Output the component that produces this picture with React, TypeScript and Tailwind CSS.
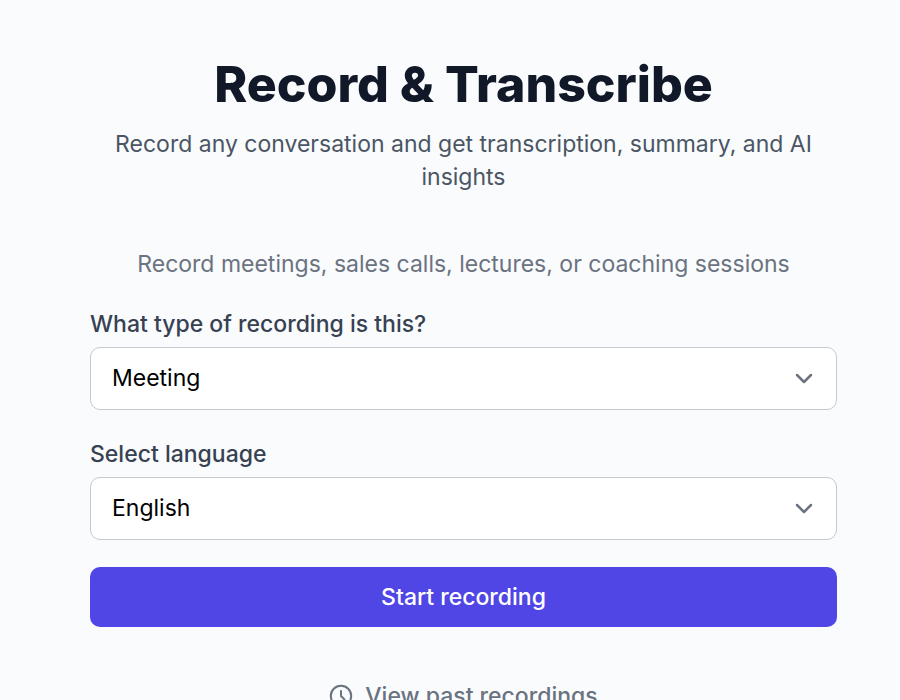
import React, { useState } from 'react';

interface SelectFieldProps {
  id: string;
  label: string;
  value: string;
  options: string[];
  onChange: (value: string) => void;
}

const ChevronIcon = () => (
  <svg viewBox="0 0 24 24" fill="none" stroke="currentColor" strokeWidth="2.5" strokeLinecap="round" strokeLinejoin="round" className="pointer-events-none absolute inset-y-0 right-[21px] my-auto h-6 w-6 text-[#6b7280]">
    <path d="M5 8l7 7 7-7" />
  </svg>
);

const ClockIcon = () => (
  <svg viewBox="0 0 24 24" fill="none" stroke="currentColor" strokeWidth="2" strokeLinecap="round" strokeLinejoin="round" className="h-6 w-6">
    <circle cx="12" cy="12" r="10.2" />
    <path d="M12 7v5l3.5 3.5" />
  </svg>
);

const SelectField: React.FC<SelectFieldProps> = ({ id, label, value, options, onChange }) => (
  <div>
    <label htmlFor={id} className="block mb-1.5 text-[23px] leading-[34px] font-medium text-[#374151]">
      {label}
    </label>
    <div className="relative">
      <select
        id={id}
        value={value}
        onChange={(e) => onChange(e.target.value)}
        className="block w-full h-[63px] appearance-none rounded-[10px] border border-[#c5c9d0] bg-white px-[21px] text-[23px] text-black"
      >
        {options.map((option) => (
          <option key={option}>{option}</option>
        ))}
      </select>
      <ChevronIcon />
    </div>
  </div>
);

const App: React.FC = () => {
  const [type, setType] = useState('Meeting');
  const [language, setLanguage] = useState('English');

  return (
    <div className="min-h-screen bg-[#f9fbfd] pl-[90px] pr-[63px] pt-14 font-['Inter',sans-serif]">
      <header className="text-center">
        <h1 className="text-[50px] leading-14 font-extrabold text-[#111827]">Record & Transcribe</h1>
        <p className="mt-4 text-[23px] leading-[33px] text-[#4b5563]">
          Record any conversation and get transcription, summary, and AI insights
        </p>
      </header>
      <main className="mt-[54px]">
        <p className="mb-[27px] text-center text-[23px] leading-8 text-[#6b7280]">
          Record meetings, sales calls, lectures, or coaching sessions
        </p>
        <div className="space-y-[27px]">
          <SelectField
            id="recording-type"
            label="What type of recording is this?"
            value={type}
            options={['Meeting', 'Sales call', 'Lecture', 'Coaching session']}
            onChange={setType}
          />
          <SelectField
            id="language"
            label="Select language"
            value={language}
            options={['English', 'Spanish', 'French', 'German']}
            onChange={setLanguage}
          />
          <button className="w-full h-15 rounded-[10px] bg-[#4f46e5] text-[23px] font-medium text-white hover:bg-[#4338ca]">
            Start recording
          </button>
        </div>
        <a href="#recordings" className="mt-[53px] flex items-center justify-center gap-3 text-[23px] leading-8 font-medium text-[#6b7280]">
          <ClockIcon />
          View past recordings
        </a>
      </main>
    </div>
  );
};

export default App;
